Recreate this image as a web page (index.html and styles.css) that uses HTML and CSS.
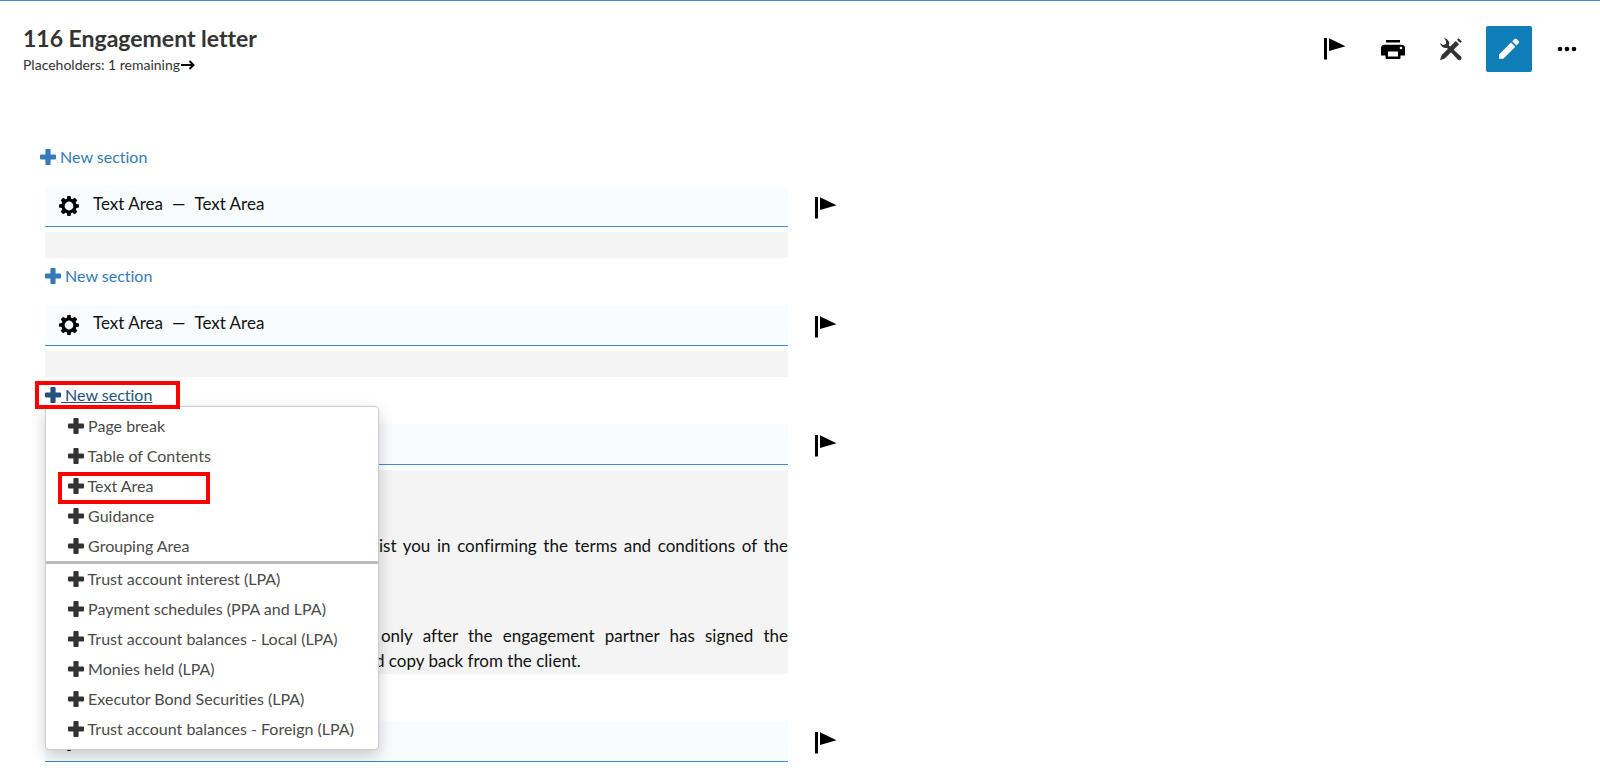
FILE: index.html
```html
<!DOCTYPE html>
<html lang="en">
<head>
    <meta charset="utf-8">
    <title>116 Engagement letter</title>
    <link rel="stylesheet" href="styles.css">
</head>
<body>
<svg class="sprite" aria-hidden="true">
    <defs>
        <symbol id="plus" viewBox="0 0 16 16">
            <path d="M6.400 0h3.200a1 1 0 0 1 1 1v4.400H15a1 1 0 0 1 1 1v3.200a1 1 0 0 1-1 1h-4.400V15a1 1 0 0 1-1 1H6.400a1 1 0 0 1-1-1v-4.400H1a1 1 0 0 1-1-1V6.400a1 1 0 0 1 1-1h4.400V1a1 1 0 0 1 1-1z"/>
        </symbol>
        <symbol id="flag" viewBox="0 0 22 22">
            <path d="M0 0h3v21.500H0zM5 .3l16.500 8L5 13z"/>
        </symbol>
        <symbol id="gear" viewBox="0 0 20 20">
            <path fill-rule="evenodd" d="M8.400 0h3.200l.5 2.700 1.400.6L15.800 1.700 18.300 4.200 16.700 6.500l.6 1.400 2.700.5v3.200l-2.700.5-.6 1.400 1.600 2.300-2.500 2.500-2.300-1.600-1.400.6-.5 2.700H8.400l-.5-2.700-1.400-.6-2.300 1.600-2.500-2.500 1.600-2.300-.6-1.400L0 11.600V8.400l2.700-.5.6-1.400L1.700 4.200 4.200 1.700l2.300 1.600 1.400-.6zM10 5.600a4.400 4.400 0 1 0 0 8.800 4.400 4.400 0 0 0 0-8.800z"/>
        </symbol>
    </defs>
</svg>

<header class="topbar">
    <div>
        <h1>116 Engagement letter</h1>
        <p class="placeholders">Placeholders: 1 remaining
            <svg class="arrow" viewBox="0 0 14 10"><path d="M0 5h12M8.500 1l4 4-4 4" fill="none" stroke="#000" stroke-width="2"/></svg>
        </p>
    </div>
    <div class="tools">
        <button type="button" aria-label="Flag"><svg class="flag"><use href="#flag"/></svg></button>
        <button type="button" aria-label="Print">
            <svg width="24" height="19" viewBox="0 0 24 19">
                <path fill-rule="evenodd" d="M5 0h14v2.600H5zM3.500 4.700h17A3.500 3.500 0 0 1 24 8.200v7.300h-4.500V18a1 1 0 0 1-1 1h-13a1 1 0 0 1-1-1v-2.500H0V8.200a3.500 3.500 0 0 1 3.500-3.500zM7 11.500v5h10v-5zM20 6.700a1.300 1.300 0 1 0 0 2.600 1.300 1.300 0 0 0 0-2.600z"/>
            </svg>
        </button>
        <button type="button" aria-label="Tools">
            <svg width="24" height="24" viewBox="0 0 24 24" fill="#333">
                <path d="M5 1a6 6 0 0 1 5 7.500L22 19.500a2.200 2.200 0 0 1-3 3.200L8 11a6 6 0 0 1-7-5l3 2 3-1V4z"/>
                <path d="M16.800 4l3.300 3.300L5.800 21.600 1 23.300l1.500-5zM18 2.800l1.600-1.600 3.300 3.300-1.600 1.600z"/>
            </svg>
        </button>
        <button type="button" class="edit" aria-label="Edit">
            <svg width="22" height="22" viewBox="0 0 22 22" fill="#fff">
                <path d="M1 16.500L13 4.500l4.300 4.300L5.300 20.800H1zM14.200 3.300L16.500 1a1.600 1.600 0 0 1 2.200 0l2 2a1.600 1.600 0 0 1 0 2.200l-2.300 2.400z"/>
            </svg>
        </button>
        <button type="button" aria-label="More">
            <svg width="20" height="6" viewBox="0 0 20 6"><circle cx="3" cy="3" r="2.300"/><circle cx="10" cy="3" r="2.300"/><circle cx="17" cy="3" r="2.300"/></svg>
        </button>
    </div>
</header>

<main>
    <div class="new-section first">
        <a href="#"><svg class="plus"><use href="#plus"/></svg> New section</a>
    </div>

    <section class="row">
        <div class="block">
            <div class="block-head"><svg class="gear"><use href="#gear"/></svg><span>Text Area</span><span class="dash">—</span><span>Text Area</span></div>
            <div class="block-body"></div>
        </div>
        <button type="button" aria-label="Flag"><svg class="flag"><use href="#flag"/></svg></button>
    </section>

    <div class="new-section">
        <a href="#"><svg class="plus"><use href="#plus"/></svg> New section</a>
    </div>

    <section class="row">
        <div class="block">
            <div class="block-head"><svg class="gear"><use href="#gear"/></svg><span>Text Area</span><span class="dash">—</span><span>Text Area</span></div>
            <div class="block-body"></div>
        </div>
        <button type="button" aria-label="Flag"><svg class="flag"><use href="#flag"/></svg></button>
    </section>

    <div class="new-section open">
        <a href="#"><svg class="plus"><use href="#plus"/></svg> New section</a>
        <div class="mark mark-link"></div>
        <ul class="menu">
            <li><a href="#"><svg class="plus"><use href="#plus"/></svg> Page break</a></li>
            <li><a href="#"><svg class="plus"><use href="#plus"/></svg> Table of Contents</a></li>
            <li><a href="#"><svg class="plus"><use href="#plus"/></svg> Text Area</a><div class="mark mark-item"></div></li>
            <li><a href="#"><svg class="plus"><use href="#plus"/></svg> Guidance</a></li>
            <li><a href="#"><svg class="plus"><use href="#plus"/></svg> Grouping Area</a></li>
            <li class="divider"></li>
            <li><a href="#"><svg class="plus"><use href="#plus"/></svg> Trust account interest (LPA)</a></li>
            <li><a href="#"><svg class="plus"><use href="#plus"/></svg> Payment schedules (PPA and LPA)</a></li>
            <li><a href="#"><svg class="plus"><use href="#plus"/></svg> Trust account balances - Local (LPA)</a></li>
            <li><a href="#"><svg class="plus"><use href="#plus"/></svg> Monies held (LPA)</a></li>
            <li><a href="#"><svg class="plus"><use href="#plus"/></svg> Executor Bond Securities (LPA)</a></li>
            <li><a href="#"><svg class="plus"><use href="#plus"/></svg> Trust account balances - Foreign (LPA)</a></li>
        </ul>
    </div>

    <section class="row">
        <div class="block">
            <div class="block-head"><svg class="gear"><use href="#gear"/></svg></div>
            <div class="block-body letter">
                <p>This letter has been created in order to assist you in confirming the terms and conditions of the engagement.</p>
                <p>The engagement letter should be issued only after the engagement partner has signed the acknowledgement. Obtain a signed and dated copy back from the client.</p>
            </div>
        </div>
        <button type="button" aria-label="Flag"><svg class="flag"><use href="#flag"/></svg></button>
    </section>

    <div class="new-section spacer"></div>

    <section class="row">
        <div class="block">
            <div class="block-head"><svg class="gear"><use href="#gear"/></svg></div>
        </div>
        <button type="button" aria-label="Flag"><svg class="flag"><use href="#flag"/></svg></button>
    </section>
</main>
</body>
</html>
```

FILE: styles.css
```css
* {
    box-sizing: border-box;
}
body {
    margin: 0;
    border-top: 1px solid #428bca;
    background: #fff;
    color: #111;
    font: 17px/25px Lato, "Open Sans", sans-serif;
    font-variant-ligatures: none;
}
a {
    color: #337ab7;
    font-size: 16px;
    text-decoration: none;
}
button {
    display: flex;
    align-items: center;
    justify-content: center;
    padding: 0;
    border: 0;
    background: none;
}
.sprite {
    position: absolute;
    width: 0;
    height: 0;
}
.plus {
    width: 16px;
    height: 16px;
    fill: currentColor;
    vertical-align: -2px;
}
.flag {
    width: 22px;
    height: 22px;
}

/* Top bar */
.topbar {
    display: flex;
    justify-content: space-between;
    padding: 25px 10px 0 23px;
    height: 138px;
}
h1 {
    margin: 0;
    color: #333;
    font-size: 23px;
    line-height: 24px;
}
.placeholders {
    margin: 6px 0 0;
    color: #333;
    font-size: 14px;
    line-height: 18px;
}
.arrow {
    width: 14px;
    height: 10px;
    margin-left: -3px;
}
.tools {
    display: flex;
    gap: 12px;
}
.tools button {
    width: 46px;
    height: 46px;
}
.tools .edit {
    border-radius: 2px;
    background: #0f7db8;
}

/* Document sections */
main {
    padding-left: 45px;
}
.new-section {
    position: relative;
    padding: 5px 0 17px;
}
.first {
    margin-left: -5px;
}
.spacer {
    height: 47px;
}
.row {
    display: flex;
    align-items: flex-start;
    gap: 27px;
}
.row > button {
    padding-top: 11px;
}
.block {
    flex: 0 1 743px;
}
.block-head {
    display: flex;
    align-items: center;
    height: 41px;
    padding: 0 14px;
    border-bottom: 1px solid #428bca;
    background: #f8fcff;
}
.block-head span {
    padding-bottom: 6px;
}
.gear {
    width: 20px;
    height: 20px;
    margin-right: 14px;
}
.dash {
    margin: 0 9px;
}
.block-body {
    min-height: 26px;
    margin-top: 5px;
    background: #f4f4f4;
}
.letter {
    padding: 63px 0 1px;
    text-align: justify;
}
.letter p {
    margin: 0;
}
.letter p + p {
    margin-top: 40px;
}

/* Open dropdown */
.open > a {
    color: #23527c;
    text-decoration: underline;
}
.menu {
    position: absolute;
    top: 29px;
    left: 0;
    z-index: 1;
    min-width: 334px;
    margin: 0;
    padding: 4px 0 5px;
    border: 1px solid #ccc;
    border-radius: 4px;
    background: #fff;
    box-shadow: 0 6px 16px rgba(0, 0, 0, .2);
    list-style: none;
    white-space: nowrap;
}
.menu li {
    position: relative;
    padding: 0 22px;
    line-height: 30px;
}
.menu a {
    color: #4a4a4a;
}
.menu .plus {
    fill: #333;
}
.menu .divider {
    height: 3px;
    background: #bbb;
}
.mark {
    position: absolute;
    z-index: 2;
    border: 4px solid #f00;
}
.mark-link {
    top: 4px;
    left: -10px;
    width: 145px;
    height: 28px;
}
.mark-item {
    top: 1px;
    left: 12px;
    width: 152px;
    height: 32px;
}
```
